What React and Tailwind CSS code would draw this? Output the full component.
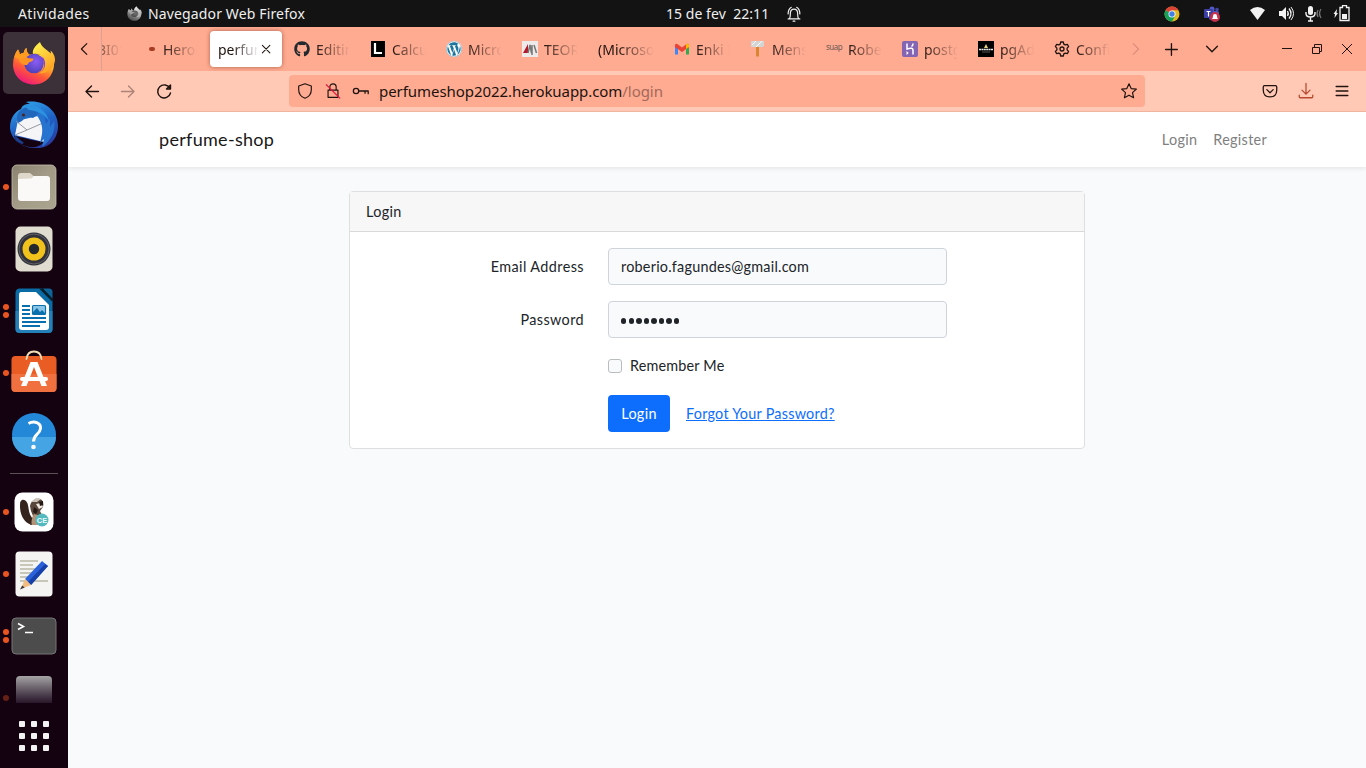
import { FaGithub, FaWordpress } from "react-icons/fa";

const ubuntu = "font-['Noto_Sans',sans-serif]";

function Line({ children, className = "", size = 20, sw = 1.3 }) {
  return (
    <svg width={size} height={size} viewBox="0 0 20 20" fill="none" stroke="currentColor" strokeWidth={sw} strokeLinecap="round" strokeLinejoin="round" className={"shrink-0 " + className}>
      {children}
    </svg>
  );
}

function FirefoxLogo({ size }) {
  return (
    <svg width={size} height={size} viewBox="0 0 44 44">
      <defs>
        <linearGradient id="fx" x1="0.85" y1="0.05" x2="0.3" y2="1">
          <stop offset="0" stopColor="#fff44f" />
          <stop offset="0.35" stopColor="#ffb22a" />
          <stop offset="0.65" stopColor="#ff5a36" />
          <stop offset="1" stopColor="#ee1580" />
        </linearGradient>
        <radialGradient id="fxb" cx="0.6" cy="0.4" r="0.65">
          <stop offset="0" stopColor="#8d5cf5" />
          <stop offset="1" stopColor="#4b3fb5" />
        </radialGradient>
        <linearGradient id="fxt" x1="0.2" y1="0" x2="0.7" y2="1">
          <stop offset="0" stopColor="#fff44f" />
          <stop offset="1" stopColor="#ff9a20" />
        </linearGradient>
      </defs>
      <path d="M6 8.500C7.200 10 7.600 12 7.800 13.500c1.200-1 2.600-1.500 4-1.700C12 9.500 13 8 14.500 7c0 3 .9 5 2.500 6.500h13L41 16c4 13-4 27.500-19 27.500C9 43.500 1 34 1 23.500 1 17.500 3 12 6 8.500z" fill="url(#fx)" />
      <circle cx="22" cy="22.500" r="9.800" fill="url(#fxb)" />
      <path d="M21 12c4-1 9 .5 10.500 5-2-1.500-4-1.500-4-1.500 5 3 6.500 11 2 15 8-4 9-11 5-18z" fill="#8b3ed0" />
      <path d="M28 1c-5 4-8 8-7 12 4-.5 8 .3 10.500 4 3.500 5.500 1 13-4.500 15.500 7 1 15-5 16-13 .3-4-2-8-4.500-10l.5 3C34 8 29.500 6 28 1z" fill="url(#fxt)" />
      <path d="M7 17c3-2 6-2 8-.5 2 1.300 4 .5 6.500 1.200 0 2-2 3-4.500 3.500-1 3-3 3.200-5 2.500C9 22.500 6.500 20.500 7 17z" fill="#ff9324" />
      <path d="M6 8.500C7.200 10 7.600 12 7.800 13.500c1.200-1 2.600-1.500 4-1.700C12 9.500 13 8 14.500 7c0 3 1 5 3 7l-5 3-6 1-4-2C3 13 4 11 6 8.500z" fill="#ff9b20" />
    </svg>
  );
}

function Thunderbird() {
  return (
    <svg width="48" height="48" viewBox="0 0 48 48">
      <defs>
        <linearGradient id="tb" x1="0.3" y1="0" x2="0.7" y2="1">
          <stop offset="0" stopColor="#2fa0e8" />
          <stop offset="0.5" stopColor="#1f5fc4" />
          <stop offset="1" stopColor="#2a3a9c" />
        </linearGradient>
      </defs>
      <path d="M16 1C33-2 48 9 48 25c0 12-8 22-20 22C13 48 1 39 0 27 0 18 4 11 11 8c1-3 3-5 9-5z" fill="url(#tb)" />
      <path d="M11 19L28 15l6 3v23L5 34l3-15z" fill="#f5f5f7" />
      <path d="M6 20l11 9 16-7M17 29L5 34" fill="none" stroke="#8a8d96" strokeWidth="0.900" />
      <path d="M4 35c8 1 19 5 30 6-3 4-9 6-14 5C12 45 6 41 4 35z" fill="#150210" />
      <path d="M4 34l10 8-2 1c-5-2-7-5-8-9z" fill="#1b3f8e" />
      <path d="M22 8C28 8 31 11 34 15l2 8 4-6v9l4-6c2 8-2 19-12 26l2-8-4 4 2-9c1-7-1-12-4-17z" fill="#2674cf" />
      <path d="M11 9c5-4 13-4 18-1-1 5-3 7-6 9-4-2-8-1-11 3L8 22C6 17 7 12 11 9z" fill="#2168bd" />
      <path d="M14 5c10-3 22 3 25 15-4-6-11-10-20-11z" fill="#2c91df" />
      <circle cx="13.500" cy="14" r="1.600" fill="#4a2624" />
    </svg>
  );
}

function Files() {
  return (
    <svg width="46" height="46" viewBox="0 0 46 46">
      <defs><linearGradient id="fl" x1="0" y1="0" x2="1" y2="1"><stop offset="0" stopColor="#8a816f" /><stop offset="0.5" stopColor="#a39b86" /><stop offset="1" stopColor="#aaa590" /></linearGradient></defs>
      <rect x="1" y="1" width="44" height="44" rx="5" fill="url(#fl)" stroke="#c4bfad" strokeWidth="0.800" />
      <rect x="7" y="12" width="32" height="25" rx="3" fill="#faf9f8" />
      <path d="M7 15V12q0-3 3-3h9l3.500 3q-1 2.500-3 2.500z" fill="#ddd8ca" />
    </svg>
  );
}

function Speaker() {
  return (
    <svg width="38" height="46" viewBox="0 0 38 46">
      <rect x="0.500" y="0.500" width="37" height="45" rx="5" fill="#e0dccf" />
      <circle cx="19" cy="23" r="16.500" fill="#32333c" />
      <circle cx="19" cy="23" r="15" fill="none" stroke="#777" strokeWidth="0.700" />
      <circle cx="19" cy="23" r="11.500" fill="#f1c21c" />
      <circle cx="19" cy="23" r="5.200" fill="#24292e" />
    </svg>
  );
}

function Writer() {
  return (
    <svg width="38" height="46" viewBox="0 0 38 46">
      <path d="M5 .5H27L37.500 12V41q0 4-4 4H4.500q-4 0-4-4V5q0-4.500 4.500-4.500z" fill="#0b6ba5" />
      <path d="M.5 23h37v18q0 4-4 4H4.500q-4 0-4-4z" fill="#2580b8" />
      <path d="M24 .5h4L37.500 10v4z" fill="#03202f" />
      <path d="M28 .5h6q3.500 0 3.500 3.500v6.500z" fill="#0e6497" />
      <path d="M6 4H21L34 17V39q0 3-3 3H7q-3 0-3-3V7q0-3 2-3z" fill="#fff" />
      <path d="M7 18h8M7 22h8M7 26h8M7 30h24M7 34h24M7 38h18" stroke="#0870ad" strokeWidth="2" />
      <rect x="17.500" y="17.500" width="13" height="9" rx="1" fill="#8ac5e6" stroke="#0870ad" strokeWidth="1.200" />
      <path d="M18 26v-2l4-4 3 4 2-2 3 3v1z" fill="#0870ad" />
    </svg>
  );
}

function Software() {
  return (
    <svg width="46" height="46" viewBox="0 0 46 46">
      <rect x="0.500" y="6" width="45" height="36" rx="4" fill="#e95c24" />
      <path d="M.5 24h45v14q0 4-4 4h-37q-4 0-4-4z" fill="#f0713f" />
      <path d="M15.500 9C16 4 19 1.500 23 1.500S30 4 30.500 9" fill="none" stroke="#f2deb4" strokeWidth="1.800" strokeLinecap="round" />
      <path d="M19.500 12h7L36 36h-5.500L23 17l-7.500 19H10z" fill="#fff" />
      <rect x="9" y="27" width="28" height="4" rx="2" fill="#fff" />
    </svg>
  );
}

function Help() {
  return (
    <svg width="46" height="46" viewBox="0 0 46 46">
      <circle cx="23" cy="23" r="22" fill="#2488d8" />
      <path d="M1 25a22 20 0 0 0 44 0z" fill="#44a4e4" />
      <path d="M17.500 11.500C23 8.500 30 10.500 29.500 16.500 29 22 22.500 22.500 22.500 29.500" fill="none" stroke="#fff" strokeWidth="3" />
      <circle cx="22.500" cy="35" r="2.300" fill="#fff" />
    </svg>
  );
}

function DBeaver() {
  return (
    <svg width="40" height="40" viewBox="0 0 40 40">
      <rect x="0.500" y="0.500" width="39" height="39" rx="8" fill="#fff" />
      <path d="M8 8c4-1 6 3 6.500 8 .5 5 2 9 5.500 12l-2 5C10 31 6 23 6 14c0-3 0-5 2-6z" fill="#35231e" />
      <path d="M16 14c1-5 5-8 10-7 3 1 4 4 3 8l-3 4 3 6-4 8h-9l3-9-2-5z" fill="#5a463b" />
      <path d="M20 22c-2 4-3 7-2 11h7l2-9z" fill="#b19377" />
      <path d="M17 10l5-4 5 1-4 3z" fill="#c9c0b6" />
      <path d="M22 12l5-1 2 4-4 2z" fill="#eee7df" />
      <path d="M25 10l4-1v4l-3 1zM20 15l4 3-2 4-3-2z" fill="#251914" />
      <circle cx="28" cy="28" r="6.500" fill="#54b8bf" />
      <text x="28" y="30.800" fontSize="7.500" fontWeight="bold" textAnchor="middle" fill="#e9fbfb" fontFamily="Liberation Sans">CE</text>
    </svg>
  );
}

function Editor() {
  return (
    <svg width="38" height="46" viewBox="0 0 38 46">
      <rect x="0.500" y="0.500" width="37" height="45" rx="4" fill="#f4f4f3" />
      <path d="M5 10h18M5 14h13M5 18h18M5 22h13M5 26h10M5 30h28" stroke="#c8c5b9" strokeWidth="1.800" />
      <path d="M10 28L27 10l6 5-17 19z" fill="#2b62d9" />
      <path d="M13 31l17-18 3 2-17 19z" fill="#1740a8" />
      <path d="M10 28l6 6-10 4z" fill="#f2bb80" />
      <path d="M7.200 34.500l2.500 2L5 38.500z" fill="#393939" />
    </svg>
  );
}

function Terminal() {
  return (
    <svg width="46" height="38" viewBox="0 0 46 38">
      <rect x="1" y="1" width="44" height="36" rx="4" fill="#4c4c4c" stroke="#747474" strokeWidth="1" />
      <path d="M7 6.500l5.500 3L7 12.500" fill="none" stroke="#fff" strokeWidth="1.600" />
      <path d="M14 15.500h8" stroke="#fff" strokeWidth="1.500" />
    </svg>
  );
}

function DockItem({ dots = 0, active, children }) {
  return (
    <div className="flex h-[62px] w-[68px] shrink-0 items-center">
      <div className="flex w-[11px] flex-col items-end gap-[2px] pr-[2px]">
        {dots > 0 && <i className="h-[6px] w-[6px] rounded-full bg-[#e95420]" />}
        {dots > 1 && <i className="h-[6px] w-[6px] rounded-full bg-[#e95420]" />}
      </div>
      <div className={active ? "-ml-2 flex h-[62px] w-[62px] items-center justify-center rounded-[5px] bg-[#3c3039]" : "-ml-2 flex h-[62px] w-[62px] items-center justify-center"}>
        {children}
      </div>
    </div>
  );
}

function Dock() {
  return (
    <aside className="flex w-[68px] shrink-0 flex-col bg-[#150210] pt-[5px]">
      <DockItem dots={1} active><FirefoxLogo size={44} /></DockItem>
      <DockItem><Thunderbird /></DockItem>
      <DockItem dots={1}><Files /></DockItem>
      <DockItem><Speaker /></DockItem>
      <DockItem dots={2}><Writer /></DockItem>
      <DockItem dots={1}><Software /></DockItem>
      <DockItem><Help /></DockItem>
      <div className="mx-[10px] mt-[7px] mb-[7px] h-px shrink-0 bg-[#5d5059]" />
      <DockItem dots={1}><DBeaver /></DockItem>
      <DockItem dots={1}><Editor /></DockItem>
      <DockItem dots={2}><Terminal /></DockItem>
      <div className="flex h-[36px] shrink-0 items-end">
        <i className="mb-[2px] ml-[3px] h-[6px] w-[6px] rounded-full bg-[#672016]" />
        <div className="ml-[7px] h-[27px] w-[36px] rounded-t-[4px] bg-linear-to-b from-[#a5a5a5] to-[#28172a]" />
      </div>
      <div className="mt-[18px] ml-[19px] grid w-[30px] grid-cols-3 gap-[6px]">
        {Array.from({ length: 9 }, (_, i) => <i key={i} className="h-[6px] w-[6px] rounded-[1px] bg-[#f2f2f2]" />)}
      </div>
    </aside>
  );
}

function TopBar() {
  return (
    <header className={"flex h-[27px] shrink-0 items-center bg-[#131313] text-[14px] text-[#efefef] " + ubuntu}>
      <span className="ml-[18px] w-[109px] tracking-[0.35px]">Atividades</span>
      <div className="w-[21px] grayscale"><FirefoxLogo size={15} /></div>
      <span className="w-[518px] whitespace-nowrap tracking-[0.14px]">Navegador Web Firefox</span>
      <span className="w-[119px] whitespace-pre tracking-[0.05px]">15 de fev  22:11</span>
      <Line size={18} sw={1.3}><path d="M3.500 15.500h13M5 15c1.200-2 .8-4 1-6.500C6.300 6 8 4.500 10 4.500s3.700 1.500 4 4c.2 2.500-.2 4.500 1 6.500M9 18h2M3.500 10c0-4 1-6 3.500-7.500M16.500 10c0-4-1-6-3.500-7.500" /></Line>
      <div className="ml-auto flex items-center">
        <svg width="16" height="16" viewBox="0 0 16 16">
          <circle cx="8" cy="8" r="7.500" fill="#e3b91d" />
          <path d="M8 8L1.500 4.300A7.500 7.500 0 0 1 14.500 4.300H8z" fill="#dc4437" />
          <path d="M1.500 4.300A7.500 7.500 0 0 0 8 15.500l3.300-5.700L8 8z" fill="#15a05a" />
          <circle cx="8" cy="8" r="3.500" fill="#fff" /><circle cx="8" cy="8" r="2.700" fill="#437fe8" />
        </svg>
        <svg width="18" height="18" viewBox="0 0 18 18" className="ml-[23px]">
          <circle cx="9" cy="4" r="2.500" fill="#525bc8" /><circle cx="14" cy="4.500" r="1.800" fill="#4148a5" />
          <rect x="6" y="6" width="10" height="9" rx="2" fill="#4f59c4" />
          <rect x="1" y="4" width="9" height="9" rx="1" fill="#3b3fa2" />
          <path d="M3.500 6.500h4M5.500 6.500v5" stroke="#fff" strokeWidth="1.200" />
          <circle cx="12" cy="12" r="5" fill="#c5304b" />
          <path d="M9 14q1-1 1-3t2-2 2 2 1 3zM11 15h2" fill="#fff" />
        </svg>
        <svg width="17" height="17" viewBox="0 0 17 17" className="ml-[28px]"><path d="M1 5Q8.500-1 16 5L8.500 15z" fill="#f2f2f2" /></svg>
        <svg width="17" height="17" viewBox="0 0 17 17" className="ml-[12px]" fill="none" stroke="#f2f2f2" strokeWidth="1.400">
          <path d="M1 6h3l4-4v13l-4-4H1z" fill="#f2f2f2" stroke="none" />
          <path d="M9.500 6q1.500 2.500 0 5M11 3.500q4 5 0 10" /><path d="M13 2q5 6.500 0 13" strokeWidth="1" />
        </svg>
        <svg width="17" height="17" viewBox="0 0 17 17" className="ml-[10px]" fill="none" stroke="#f2f2f2" strokeWidth="1.400">
          <rect x="3" y="1" width="5" height="9" rx="2.500" fill="#f2f2f2" stroke="none" />
          <path d="M1 7v1.500q0 3.500 4.500 3.500T10 8.500V7M5.500 12v4M3 16h5" /><path d="M13 5q-2 3.500 0 7M16 4q-3 4.500 0 9" stroke="#777" strokeWidth="1.200" />
        </svg>
        <svg width="17" height="17" viewBox="0 0 17 17" className="mr-[16px] ml-[11px]">
          <path d="M4 4L.5 9H2l-.5 4L5 8H3.500z" fill="#f2f2f2" />
          <path d="M7 2.500h2.500v-2h4v2H16v13H7z" fill="none" stroke="#f2f2f2" strokeWidth="1.300" /><rect x="9" y="9" width="5" height="5" fill="#f2f2f2" />
        </svg>
      </div>
    </header>
  );
}

const gear = (
  <svg width="16" height="16" viewBox="0 0 16 16" fill="none" stroke="#21140f" strokeWidth="1.300" strokeLinejoin="round">
    <path d="M6.700 1h2.600l.5 2.100 1.400.8 2.100-.6 1.300 2.300-1.500 1.500v1.800l1.500 1.500-1.300 2.300-2.100-.6-1.400.8L9.300 15H6.700l-.5-2.100-1.400-.8-2.100.6-1.300-2.300 1.500-1.500V7.100L1.400 5.600l1.300-2.300 2.100.6 1.400-.8z" /><circle cx="8" cy="8" r="2" />
  </svg>
);

const tabs = [
  { text: "Editing", icon: <FaGithub size={16} color="#24292e" /> },
  { text: "Calcular", icon: <svg width="16" height="16" viewBox="0 0 16 16"><path d="M1 0h14v16H1z" /><path d="M5 2v10h7" fill="none" stroke="#fff" strokeWidth="2.200" /></svg> },
  { text: "Micros", icon: <span className="flex rounded-full bg-white"><FaWordpress size={16} color="#1d759d" /></span> },
  { text: "TEORI", icon: <svg width="16" height="16" viewBox="0 0 16 16"><path d="M0 0h16v16H0z" fill="#eeeaea" /><path d="M1 12L6 3v9z" fill="#b5182b" /><path d="M6 12L8 4l1.500 8M10 4v10M12 4l2.500 8" stroke="#777" strokeWidth="1.500" fill="none" /></svg> },
  { text: "(Microsoft", icon: null },
  { text: "Enki I", icon: <svg width="16" height="16" viewBox="0 0 16 16"><path d="M1 4v9.500h3V6z" fill="#4285f4" /><path d="M12 6v7.500h3V4z" fill="#34a853" /><path d="M1 4q1-2 3-.5l4 3 4-3Q14 2 15 4v2l-7 5-7-5z" fill="#ea4335" /><path d="M12 3.500Q14 2 15 4v2l-3 2z" fill="#fbbc04" /></svg> },
  { text: "Mensa", icon: <svg width="16" height="16" viewBox="0 0 16 16"><path d="M1 0h13v5l-2 1H1z" fill="#d4d6d6" /><path d="M2 4L6 0M6 6l6-6" stroke="#f8f8f8" /><path d="M6 6h3v9.500H6z" fill="#d98632" /></svg> },
  { text: "Rober", icon: <span className="-mt-[5px] w-[17px] text-[8px] leading-none tracking-[-0.5px] text-[#6f5a54]">suap</span> },
  { text: "postg", icon: <svg width="16" height="16" viewBox="0 0 16 16"><rect width="16" height="16" rx="2" fill="#8465b3" /><path d="M5 2.500v5.500q6-2 6 1v4.500M11 2.500q0 2-1.500 3" stroke="#fff" strokeWidth="1.500" fill="none" /><path d="M4.500 10l2.200 2-2.200 2z" fill="#fff" /></svg> },
  { text: "pgAdm", icon: <svg width="16" height="16" viewBox="0 0 16 16"><path d="M0 0h16v16H0z" /><path d="M6 7l2-4 2 4z" fill="#e5d27a" /><path d="M1 8.500h14" stroke="#e8e8e8" strokeWidth="1.600" strokeDasharray="2 .4" /><path d="M4 11h8" stroke="#555" /></svg> },
  { text: "Config", icon: gear },
];

const fade = "overflow-hidden whitespace-nowrap mask-[linear-gradient(to_right,black_0,transparent_100%)]";
const lateFade = "overflow-hidden whitespace-nowrap mask-[linear-gradient(to_right,black_35%,transparent_100%)]";

function TabStrip() {
  return (
    <div className="flex h-[44px] shrink-0 items-center bg-[#ffab91] text-[14px] text-[#20130f]">
      <div className="flex h-full w-[34px] items-center justify-center border-r border-[#dba293]"><Line size={18} className="text-[#20130f]"><path d="M12 4l-6 6 6 6" /></Line></div>
      <div className="flex h-full w-[1016px] items-center overflow-hidden">
        <div className={"w-[20px] shrink-0 text-[#8d5c4e] " + fade}><span className="-ml-[5px]">BI01</span></div>
        <div className="ml-[12px] flex w-[76px] shrink-0 items-center pl-[15px]">
          <i className="mr-[8px] h-[4px] w-[6px] rounded-full bg-[#a43d22]" />
          <span className={"w-[34px] " + fade}>Herok</span>
        </div>
        <div className="w-[76px] shrink-0">
          <div className="flex h-[36px] w-[72px] items-center rounded-[4px] bg-white pl-[8px] shadow-[0_0_4px_rgba(80,30,10,0.5)]">
            <span className={"w-[41px] " + lateFade}>perfume</span>
            <Line size={15} sw={1.4}><path d="M4.500 4.500l10 10M14.500 4.500l-10 10" /></Line>
          </div>
        </div>
        {tabs.map((t) => (
          <div key={t.text} className="flex w-[76px] shrink-0 items-center pl-[8px]">
            {t.icon && <span className="flex w-[22px] shrink-0">{t.icon}</span>}
            <span className={t.icon ? "w-[34px] " + fade : "w-[56px] " + lateFade}>{t.text}</span>
          </div>
        ))}
      </div>
      <div className="flex items-center">
        <div className="flex w-[34px] justify-center"><Line size={18} className="text-[#dc8d78]"><path d="M8 4l6 6-6 6" /></Line></div>
        <div className="flex w-[38px] justify-center"><Line size={18} sw={1.500}><path d="M10.500 4v13M4 10.500h13" /></Line></div>
        <div className="flex w-[44px] justify-center"><Line size={18} sw={1.500}><path d="M4 7l6 6 6-6" /></Line></div>
      </div>
      <div className="ml-auto flex w-[94px] items-center">
        <div className="flex w-[30px] justify-center"><svg width="12" height="12"><path d="M1 5.500h10" stroke="#20130f" /></svg></div>
        <div className="flex w-[30px] justify-center"><svg width="12" height="12" fill="none" stroke="#20130f"><path d="M1.500 4.500h7v6h-7zM3.500 4V1.500h7v7H9" /></svg></div>
        <div className="flex w-[30px] justify-center"><svg width="12" height="12"><path d="M1 1l10 10M11 1L1 11" stroke="#20130f" /></svg></div>
      </div>
    </div>
  );
}

function Toolbar() {
  return (
    <div className="flex h-[41px] shrink-0 items-center border-b border-[#f5b6a0] bg-[#ffc9b6] text-[#20130f]">
      <div className="flex w-[221px] items-center gap-[16px] pl-[14px]">
        <Line sw={1.400}><path d="M16.500 10.500H4M9.500 5L4 10.500 9.500 16" /></Line>
        <Line sw={1.400} className="text-[#ad8478]"><path d="M3.500 10.500H16M10.500 5l5.500 5.500-5.500 5.500" /></Line>
        <Line sw={1.400}><path d="M16 7.500A6.500 6.500 0 1 0 16.500 12M16.500 4v4h-4z" /></Line>
      </div>
      <div className="flex h-[32px] w-[856px] shrink-0 items-center rounded-[4px] bg-[#ffab91] pl-[7px]">
        <Line size={18} sw={1.300}><path d="M10 2l7 2.500v4C17 13 14 16.500 10 18 6 16.500 3 13 3 8.500v-4z" /></Line>
        <Line size={18} sw={1.300} className="ml-[10px]"><path d="M4.500 9h11v8h-11zM6.500 9V5.500a3.500 3.500 0 0 1 7 0V9" /><path d="M2.500 3l15 15" stroke="#e7133d" /></Line>
        <Line size={18} sw={1.400} className="ml-[10px]"><circle cx="4.500" cy="10" r="3" /><path d="M7.500 10H18v3M14.500 10v2.500" /></Line>
        <span className="ml-[9px] w-[741px] text-[15px] tracking-[-0.06px] whitespace-nowrap">perfumeshop2022.herokuapp.com<span className="text-[#a3695a]">/login</span></span>
        <Line size={18} sw={1.300}><path d="M10 2l2.400 5.300 5.800.6-4.300 3.900 1.200 5.700L10 14.600l-5.100 2.900 1.200-5.700L1.800 7.900l5.800-.6z" /></Line>
      </div>
      <div className="ml-auto flex items-center gap-[18px] pr-[15px]">
        <Line size={18} sw={1.400}><path d="M4 4h12q1.500 0 1.500 1.500V9q0 7.500-7.500 7.500T2.500 9V5.500Q2.500 4 4 4zM6.500 8.500L10 12l3.500-3.500" /></Line>
        <Line size={18} sw={1.400} className="text-[#b54a2e]"><path d="M10 1.500v12M5.500 9L10 13.500 14.500 9M2.500 14.500v2q0 1 1 1h13q1 0 1-1v-2" /></Line>
        <Line size={18} sw={1.500}><path d="M3.500 5h13M3.500 10h13M3.500 15h13" /></Line>
      </div>
    </div>
  );
}

function LoginPage() {
  return (
    <main className="flex flex-1 flex-col items-center bg-[#f8fafc] font-[Lato,sans-serif] text-[14.4px] leading-[23px] text-[#212529]">
      <nav className="flex h-[55px] w-full shrink-0 items-center justify-between bg-white pr-[99px] pl-[91px] shadow-[0_2px_4px_rgba(0,0,0,0.075)]">
        <a className="text-[18px] tracking-[0.3px] text-[#181818]">perfume-shop</a>
        <div className="flex gap-[16px] tracking-[0.3px] text-[#7f7f7f]"><a>Login</a><a>Register</a></div>
      </nav>
      <section className="mt-[24px] flex h-[258px] w-[736px] flex-col rounded-[4px] border border-[#dfdfdf] bg-white">
        <h1 className="h-[40px] shrink-0 border-b border-[#d9d9d9] bg-[#f7f7f7] px-[16px] py-[8px] tracking-[0.35px]">Login</h1>
        <form className="grid grid-cols-[234px_339px] gap-x-[24px] pt-[16px]">
          <label className="pt-[7px] text-right tracking-[0.42px]">Email Address</label>
          <div className="h-[37px] rounded-[4px] border border-[#ced4da] bg-[#f8fafc] px-[12px] py-[6px] tracking-[0.23px]">roberio.fagundes@gmail.com</div>
          <label className="mt-[16px] pt-[7px] text-right tracking-[0.4px]">Password</label>
          <div className="mt-[16px] flex h-[37px] items-center gap-[2.200px] rounded-[4px] border border-[#ced4da] bg-[#f8fafc] px-[12px] pt-[3px]">
            {Array.from({ length: 8 }, (_, i) => <i key={i} className="h-[5.400px] w-[5.400px] rounded-full bg-[#212529]" />)}
          </div>
          <div className="col-start-2 mt-[16px] flex h-[23px] items-center">
            <i className="h-[14px] w-[14px] rounded-[3px] border border-[#babdc0] bg-[#f8fafc]" />
            <span className="ml-[8px] tracking-[0.18px]">Remember Me</span>
          </div>
          <div className="col-start-2 mt-[18px] flex items-center">
            <button type="button" className="h-[37px] w-[62px] rounded-[4px] bg-[#0d6efd] tracking-[0.3px] text-white">Login</button>
            <a className="ml-[16px] tracking-[0.25px] text-[#0d6efd] underline">Forgot Your Password?</a>
          </div>
        </form>
      </section>
    </main>
  );
}

export default function App() {
  return (
    <div className="flex h-[768px] w-[1366px] flex-col overflow-hidden">
      <TopBar />
      <div className="flex min-h-0 flex-1">
        <Dock />
        <div className={"flex min-w-0 flex-1 flex-col " + ubuntu}>
          <TabStrip />
          <Toolbar />
          <LoginPage />
        </div>
      </div>
    </div>
  );
}
